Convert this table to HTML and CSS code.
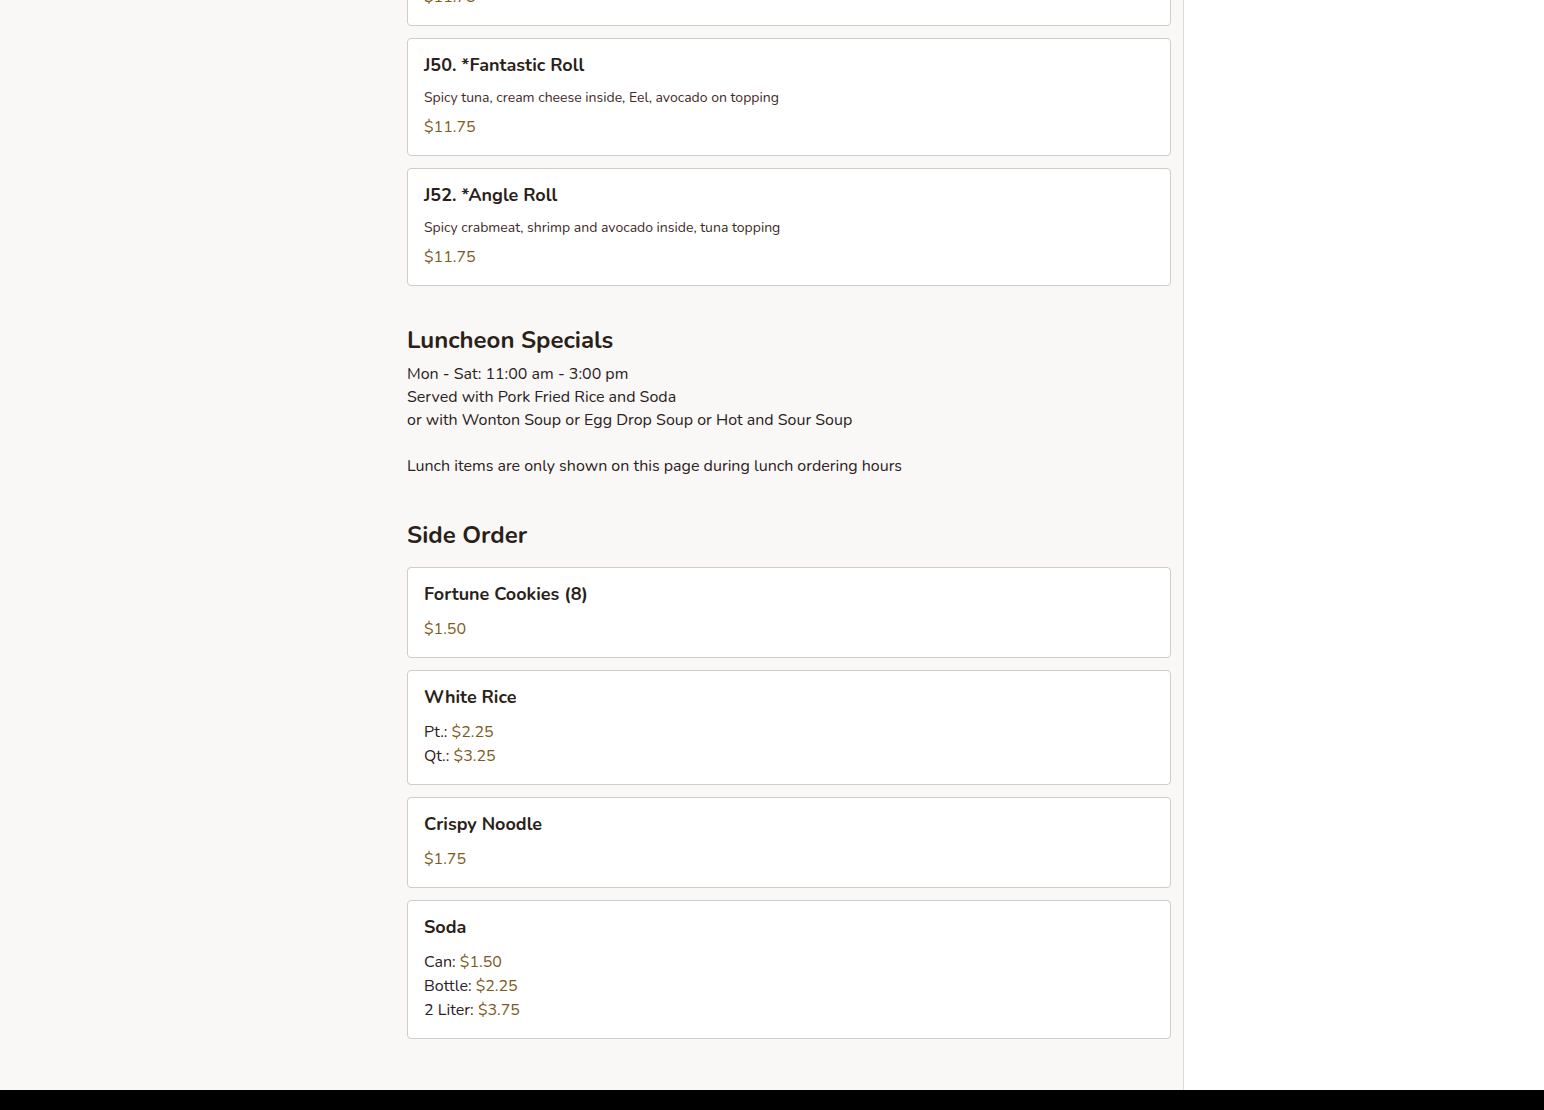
FILE: index.html
```html
<!DOCTYPE html>
<html>
<head>
<meta charset="UTF-8">
<title>Menu</title>
<link rel="stylesheet" href="styles.css">
</head>
<body>

<div class="page">
    <div class="main">
        <div class="menu">

            <div class="section">
                <div class="item cut">
                    <div class="price">$11.75</div>
                </div>

                <div class="item">
                    <div class="name">J50. *Fantastic Roll</div>
                    <div class="desc">Spicy tuna, cream cheese inside, Eel, avocado on topping</div>
                    <div class="price">$11.75</div>
                </div>

                <div class="item">
                    <div class="name">J52. *Angle Roll</div>
                    <div class="desc">Spicy crabmeat, shrimp and avocado inside, tuna topping</div>
                    <div class="price">$11.75</div>
                </div>
            </div>

            <div class="section">
                <h2>Luncheon Specials</h2>
                <p class="note">Mon - Sat: 11:00 am - 3:00 pm<br>
                Served with Pork Fried Rice and Soda<br>
                or with Wonton Soup or Egg Drop Soup or Hot and Sour Soup<br>
                <br>
                Lunch items are only shown on this page during lunch ordering hours</p>
            </div>

            <div class="section">
                <h2>Side Order</h2>

                <div class="item">
                    <div class="name">Fortune Cookies (8)</div>
                    <div class="prices"><span class="price">$1.50</span></div>
                </div>

                <div class="item">
                    <div class="name">White Rice</div>
                    <div class="prices">
                        <div>Pt.: <span class="price">$2.25</span></div>
                        <div>Qt.: <span class="price">$3.25</span></div>
                    </div>
                </div>

                <div class="item">
                    <div class="name">Crispy Noodle</div>
                    <div class="prices"><span class="price">$1.75</span></div>
                </div>

                <div class="item">
                    <div class="name">Soda</div>
                    <div class="prices">
                        <div>Can: <span class="price">$1.50</span></div>
                        <div>Bottle: <span class="price">$2.25</span></div>
                        <div>2 Liter: <span class="price">$3.75</span></div>
                    </div>
                </div>
            </div>

        </div>
    </div>
    <div class="side"></div>
</div>

<div class="footer"></div>

</body>
</html>
```

FILE: styles.css
```css
html, body {
    margin: 0;
    padding: 0;
}

body {
    font-family: 'Nunito', 'Lato', 'Noto Sans', sans-serif;
    color: #2b211d;
    background: #ffffff;
    height: 1110px;
    overflow: hidden;
    display: flex;
    flex-direction: column;
}

.page {
    display: flex;
    flex: 1;
    min-height: 0;
}

.main {
    width: 1184px;
    background: #f9f8f6;
    border-right: 1px solid #dddbd8;
    padding: 0 12px 0 407px;
    box-sizing: border-box;
    overflow: hidden;
}

.side {
    flex: 1;
    background: #ffffff;
}

.footer {
    height: 20px;
    background: #000000;
}

/* list is scrolled: the first card is partly above the top edge */
.menu {
    margin-top: -30px;
}

.section {
    margin-bottom: 38px;
}

.section h2 {
    font-size: 24px;
    font-weight: 700;
    color: #2b1f1a;
    margin: 0 0 7px;
    line-height: 32px;
}

.section h2 + .item {
    margin-top: 16px;
}

.note {
    margin: 0;
    padding-bottom: 3px;
    font-size: 16px;
    line-height: 23px;
    color: #2b211d;
}

.item {
    background: #ffffff;
    border: 1px solid #cfcdca;
    border-radius: 4px;
    padding: 14px 16px 16px;
    margin-bottom: 12px;
}

.name {
    font-size: 18px;
    font-weight: 700;
    line-height: 24px;
    color: #2b1f1a;
}

.desc {
    font-size: 14px;
    line-height: 20px;
    color: #3f2a28;
    margin-top: 11px;
}

.price {
    font-size: 16px;
    line-height: 24px;
    color: #7b5b1e;
}

.desc + .price {
    margin-top: 7px;
}

.prices {
    font-size: 16px;
    line-height: 24px;
    margin-top: 11px;
}
```
